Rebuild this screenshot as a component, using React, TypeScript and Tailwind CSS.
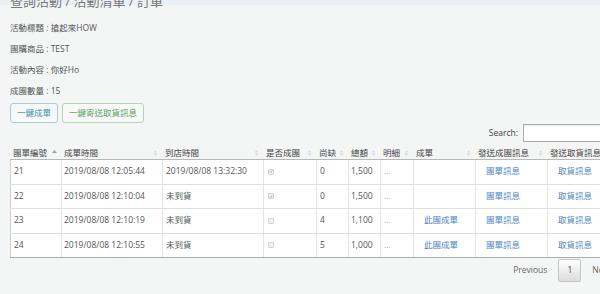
import clsx from 'clsx'

type Order = {
  id: string
  createdAt: string
  arrivedAt: string
  grouped: boolean
  short: string
  total: string
  canClose: boolean
}

const orders: Order[] = [
  { id: '21', createdAt: '2019/08/08 12:05:44', arrivedAt: '2019/08/08 13:32:30', grouped: true, short: '0', total: '1,500', canClose: false },
  { id: '22', createdAt: '2019/08/08 12:10:04', arrivedAt: '未到貨', grouped: true, short: '0', total: '1,500', canClose: false },
  { id: '23', createdAt: '2019/08/08 12:10:19', arrivedAt: '未到貨', grouped: false, short: '4', total: '1,100', canClose: true },
  { id: '24', createdAt: '2019/08/08 12:10:55', arrivedAt: '未到貨', grouped: false, short: '5', total: '1,000', canClose: true },
]

const headers = ['團單編號', '成單時間', '到店時間', '是否成團', '尚缺', '總額', '明細', '成單', '發送成團訊息', '發送取貨訊息']

const info = [
  ['活動標題', '搶起來HOW'],
  ['團購商品', 'TEST'],
  ['活動內容', '你好Ho'],
  ['成團數量', '15'],
]

const cols = 'grid grid-cols-[51px_101px_101px_53px_32px_32px_33px_62px_72px_75px]'

const SortIcon = ({ active }: { active?: boolean }) =>
  active ? (
    <svg width="5" height="8" viewBox="0 0 5 8" className="mt-[2px] shrink-0">
      <path d="M0 4 L2.5 1 L5 4 Z" fill="#9aa3ab" />
    </svg>
  ) : (
    <svg width="5" height="8" viewBox="0 0 5 8" className="mt-[2px] shrink-0">
      <path d="M0.5 3.5 L2.5 1 L4.5 3.5 Z" fill="#dcdcdc" />
      <path d="M0.5 4.5 L2.5 7 L4.5 4.5 Z" fill="#dcdcdc" />
    </svg>
  )

const Check = ({ on }: { on: boolean }) => (
  <span className="flex h-[6px] w-[6px] items-center justify-center rounded-[1px] border border-[#d4d4d4] bg-[#f0f0f0]">
    {on && (
      <svg width="5" height="5" viewBox="0 0 5 5">
        <path d="M0.8 2.6 L2 3.8 L4.2 1.2" fill="none" stroke="#9a9a9a" strokeWidth="0.9" />
      </svg>
    )}
  </span>
)

const Link = ({ children }: { children: string }) => <span className="pl-[10px] text-[#4d86c2]">{children}</span>

export default function App() {
  return (
    <div className="h-[294px] w-[600px] overflow-hidden bg-[#f4f5f5] font-['Open_Sans','Noto_Sans_CJK_TC',sans-serif] text-[8.5px] text-[#555]">
      <div className="h-[5px] bg-[#eceff3]" />
      <div className="w-[632px] px-[10px]">
        <div className="relative mt-[-10px] h-[13px] text-[13px] leading-[13px] text-[#777]">查詢活動 / 活動清單 / 訂單</div>
        <div className="mt-[8.5px]">
          {info.map(([k, v]) => (
            <div key={k} className="h-[21px] leading-[21px]">
              {k} : {v}
            </div>
          ))}
        </div>
        <div className="mt-[2.5px] flex gap-[4px]">
          <button className="h-[20px] rounded-[3px] border border-[#a9ccd7] bg-[#f7f9f9] px-[6px] text-[#4a8fb0]">一鍵成單</button>
          <button className="h-[20px] rounded-[3px] border border-[#b4d5b4] bg-[#f7f9f9] px-[6px] text-[#5d9d5d]">一鍵寄送取貨訊息</button>
        </div>
        <div className="mt-[1px] flex h-[18px] items-center justify-end gap-[5px] text-[#444]">
          <span>Search:</span>
          <span className="h-[18px] w-[99px] border border-[#a9a9a9] bg-white shadow-[inset_0_1px_1px_rgba(0,0,0,0.08)]" />
        </div>

        <div className={clsx(cols, 'h-[18px] border-b border-[#b8b8b8] leading-[12px] text-[#444]')}>
          {headers.map((h, i) => (
            <div key={h} className="flex items-start justify-between pt-[5px] pl-[3px] pr-[4px]">
              <span className="whitespace-nowrap">{h}</span>
              {i < 9 && <SortIcon active={i === 0} />}
            </div>
          ))}
        </div>

        {orders.map((o, r) => (
          <div
            key={o.id}
            className={clsx(
              cols,
              'h-[24.5px] border-b bg-white',
              r === orders.length - 1 ? 'border-[#adadad]' : 'border-[#dfdfdf]',
            )}
          >
            <div className="flex items-center border-l border-[#cfcfcf] pl-[3px]">{o.id}</div>
            <div className="flex items-center border-l border-[#e4e4e4] pl-[2px]">{o.createdAt}</div>
            <div className="flex items-center border-l border-[#e4e4e4] pl-[3px]">{o.arrivedAt}</div>
            <div className="flex items-center border-l border-[#e4e4e4] pl-[4px]">
              <Check on={o.grouped} />
            </div>
            <div className="flex items-center border-l border-[#e4e4e4] pl-[3px]">{o.short}</div>
            <div className="flex items-center border-l border-[#e4e4e4] pl-[2px]">{o.total}</div>
            <div className="flex items-center border-l border-[#e4e4e4] pl-[3px] text-[#aaa]">...</div>
            <div className="flex items-center border-l border-[#e4e4e4]">{o.canClose && <Link>此團成單</Link>}</div>
            <div className="flex items-center border-l border-[#e4e4e4]">
              <Link>團單訊息</Link>
            </div>
            <div className="flex items-center border-l border-[#e4e4e4]">
              <Link>取貨訊息</Link>
            </div>
          </div>
        ))}

        <div className="mt-[1px] flex h-[23px] items-center justify-end text-[#666]">
          <span className="px-[11px]">Previous</span>
          <span className="flex h-[23px] w-[23px] items-center justify-center rounded-[2px] border border-[#c6c6c6] bg-gradient-to-b from-white to-[#dcdcdc] text-[#444]">
            1
          </span>
          <span className="px-[11px]">Next</span>
        </div>
      </div>
    </div>
  )
}
